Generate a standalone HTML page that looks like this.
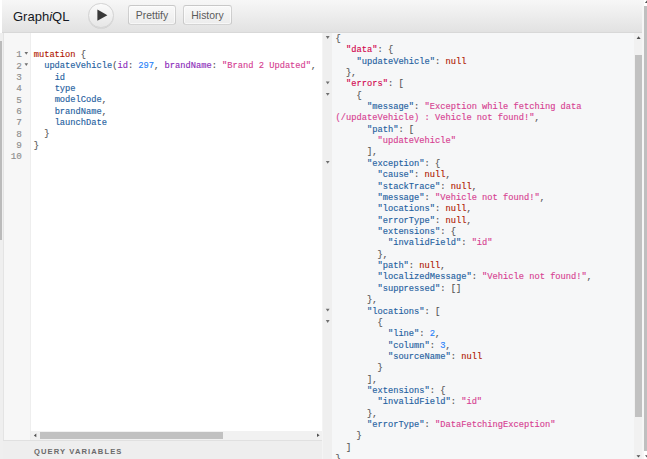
<!DOCTYPE html>
<html><head><meta charset="utf-8"><style>
*{margin:0;padding:0;box-sizing:border-box}
html,body{width:647px;height:459px;overflow:hidden;background:#fff;position:relative}
.a{position:absolute}
#top{left:2px;top:0;width:640px;height:33px;background:linear-gradient(#f7f7f7,#e2e2e2);border-bottom:1px solid #d8d8d8}
#title{left:13px;top:7.6px;font-family:"Liberation Sans",sans-serif;font-size:13px;color:#141823;line-height:18px}
#run{left:88.3px;top:2.9px;width:25.5px;height:25.5px;border-radius:50%;border:1px solid #d3d3d3;background:linear-gradient(#fbfbfb,#e6e6e6);box-shadow:0 0.6px 0.6px rgba(0,0,0,.1)}
.btn{top:5.3px;height:19.6px;border:1px solid rgba(0,0,0,.15);border-radius:3px;background:linear-gradient(#f9f9f9,#ececec);box-shadow:inset 0 0 0 1px rgba(255,255,255,.6);font-family:"Liberation Sans",sans-serif;font-size:10.4px;color:#5a5a5a;text-align:center;line-height:19px}
.code{font-family:"Liberation Mono",monospace;font-size:8.72px;line-height:11.33px;white-space:pre;-webkit-text-stroke:0.14px currentColor}
#strip{left:0;top:33px;width:2.5px;height:426px;background:#efefef}
#leftbar{left:0;top:41.2px;width:1.5px;height:199px;background:#bbb}
#gut{left:2.5px;top:33px;width:28px;height:407px;background:#f7f7f7;border-left:0.6px solid #e4e4e4;border-right:1px solid #eee}
#lnums{left:3px;width:18.8px;text-align:right;color:#8e8e8e;font-size:9.3px}
#hs{left:30.5px;top:431px;width:291.5px;height:8.5px;background:#f1f1f1}
#qv{left:3px;top:440px;width:319px;height:19px;background:#eee;border-top:1px solid #e0e0e0}
#qvt{left:34px;top:446.8px;font-family:"Liberation Sans",sans-serif;font-weight:bold;font-size:7.6px;letter-spacing:1.1px;color:#6a6a6a;line-height:9px}
#rgut{left:321.8px;top:33px;width:10.4px;height:426px;background:#efefef;border-left:1.5px solid #f4f4f4}
#rbg{left:332px;top:33px;width:310px;height:426px;background:#f6f7f8}
#vs{left:634.2px;top:33px;width:7.8px;height:426px;background:#f1f1f1}
#vsthumb{left:635.2px;top:54.8px;width:6.5px;height:362.7px;background:#c1c1c1}
#far{left:643.6px;top:5.9px;width:4px;height:445.1px;background:#bfbfbf}
.kw{color:#B11A04}.pr{color:#1F61A0}.at{color:#8B2BB9}.nu{color:#2882F9}.st{color:#D64292}.pu{color:#555}.df{color:#D2054E}
.fold{color:#777;font-size:6px}
</style></head><body>
<div id="top" class="a"></div>
<div id="title" class="a">Graph<i>i</i>QL</div>
<div id="run" class="a"><svg width="26" height="26" style="position:absolute;left:-1px;top:-1px"><path d="M9.4 6.6 L19.4 12.2 L9.4 17.8 Z" fill="#383838"/></svg></div>
<div class="a btn" style="left:128px;width:48px">Prettify</div>
<div class="a btn" style="left:183px;width:49px">History</div>

<div id="strip" class="a"></div><div id="leftbar" class="a"></div>
<div id="gut" class="a"></div>
<div id="lnums" class="a code" style="top:49.4px">1
2
3
4
5
6
7
8
9
10</div>
<svg class="a" style="left:0;top:0" width="647" height="459"><g fill="#707070"><path d="M24.5 52 L28.1 52 L26.3 54.7Z"/><path d="M24.5 63.3 L28.1 63.3 L26.3 66Z"/></g></svg>
<div class="a code" style="left:33.7px;top:50.1px"><span class="kw">mutation</span> <span class="pu">{</span>
  <span class="pr">updateVehicle</span><span class="pu">(</span><span class="at">id</span><span class="pu">:</span> <span class="nu">297</span><span class="pu">,</span> <span class="at">brandName</span><span class="pu">:</span> <span class="st">"Brand 2 Updated"</span><span class="pu">,</span>
    <span class="pr">id</span>
    <span class="pr">type</span>
    <span class="pr">modelCode</span><span class="pu">,</span>
    <span class="pr">brandName</span><span class="pu">,</span>
    <span class="pr">launchDate</span>
  <span class="pu">}</span>
<span class="pu">}</span>
</div>
<div id="hs" class="a"></div>
<div class="a" style="left:39.5px;top:432px;width:183.5px;height:6.8px;background:#c1c1c1"></div>
<div id="qv" class="a"></div>
<div id="qvt" class="a">QUERY VARIABLES</div>

<div id="rgut" class="a"></div>
<div id="rbg" class="a"></div>
<div class="a code pu" style="left:335.6px;top:33.9px;line-height:11.36px"><span class="pu">{</span>
  <span class="df">"data"</span>: {
    <span class="pr">"updateVehicle"</span>: <span class="kw">null</span>
  },
  <span class="df">"errors"</span>: [
    {
      <span class="pr">"message"</span>: <span class="st">"Exception while fetching data</span>
<span class="st">(/updateVehicle) : Vehicle not found!"</span>,
      <span class="pr">"path"</span>: [
        <span class="st">"updateVehicle"</span>
      ],
      <span class="pr">"exception"</span>: {
        <span class="pr">"cause"</span>: <span class="kw">null</span>,
        <span class="pr">"stackTrace"</span>: <span class="kw">null</span>,
        <span class="pr">"message"</span>: <span class="st">"Vehicle not found!"</span>,
        <span class="pr">"locations"</span>: <span class="kw">null</span>,
        <span class="pr">"errorType"</span>: <span class="kw">null</span>,
        <span class="pr">"extensions"</span>: {
          <span class="pr">"invalidField"</span>: <span class="st">"id"</span>
        },
        <span class="pr">"path"</span>: <span class="kw">null</span>,
        <span class="pr">"localizedMessage"</span>: <span class="st">"Vehicle not found!"</span>,
        <span class="pr">"suppressed"</span>: []
      },
      <span class="pr">"locations"</span>: [
        {
          <span class="pr">"line"</span>: <span class="nu">2</span>,
          <span class="pr">"column"</span>: <span class="nu">3</span>,
          <span class="pr">"sourceName"</span>: <span class="kw">null</span>
        }
      ],
      <span class="pr">"extensions"</span>: {
        <span class="pr">"invalidField"</span>: <span class="st">"id"</span>
      },
      <span class="pr">"errorType"</span>: <span class="st">"DataFetchingException"</span>
    }
  ]
}</div>
<div id="vs" class="a"></div>
<div id="vsthumb" class="a"></div>
<div class="a" style="left:642px;top:0;width:1.6px;height:459px;background:#f6f6f6"></div><div id="far" class="a"></div>
<svg class="a" style="left:0;top:0" width="647" height="459"><g fill="#707070"><path d="M325.8 36.10 L329.6 36.10 L327.7 38.90Z"/><path d="M325.8 81.54 L329.6 81.54 L327.7 84.34Z"/><path d="M325.8 92.90 L329.6 92.90 L327.7 95.70Z"/><path d="M325.8 161.06 L329.6 161.06 L327.7 163.86Z"/><path d="M325.8 308.74 L329.6 308.74 L327.7 311.54Z"/><path d="M325.8 320.10 L329.6 320.10 L327.7 322.90Z"/></g><g fill="#505050"><path d="M33.9 435.4 L36.3 433.6 L36.3 437.2Z"/><path d="M319.6 435.3 L317 433.5 L317 437.1Z"/><path d="M638.6 36.3 L640.6 38.9 L636.6 38.9Z"/><path d="M636.5 455.2 L640.4 455.2 L638.45 457.6Z"/><path d="M645 455.2 L648.9 455.2 L646.95 457.6Z"/><path d="M646.9 0.5 L648.9 3 L644.9 3Z"/></g></svg>
</body></html>
